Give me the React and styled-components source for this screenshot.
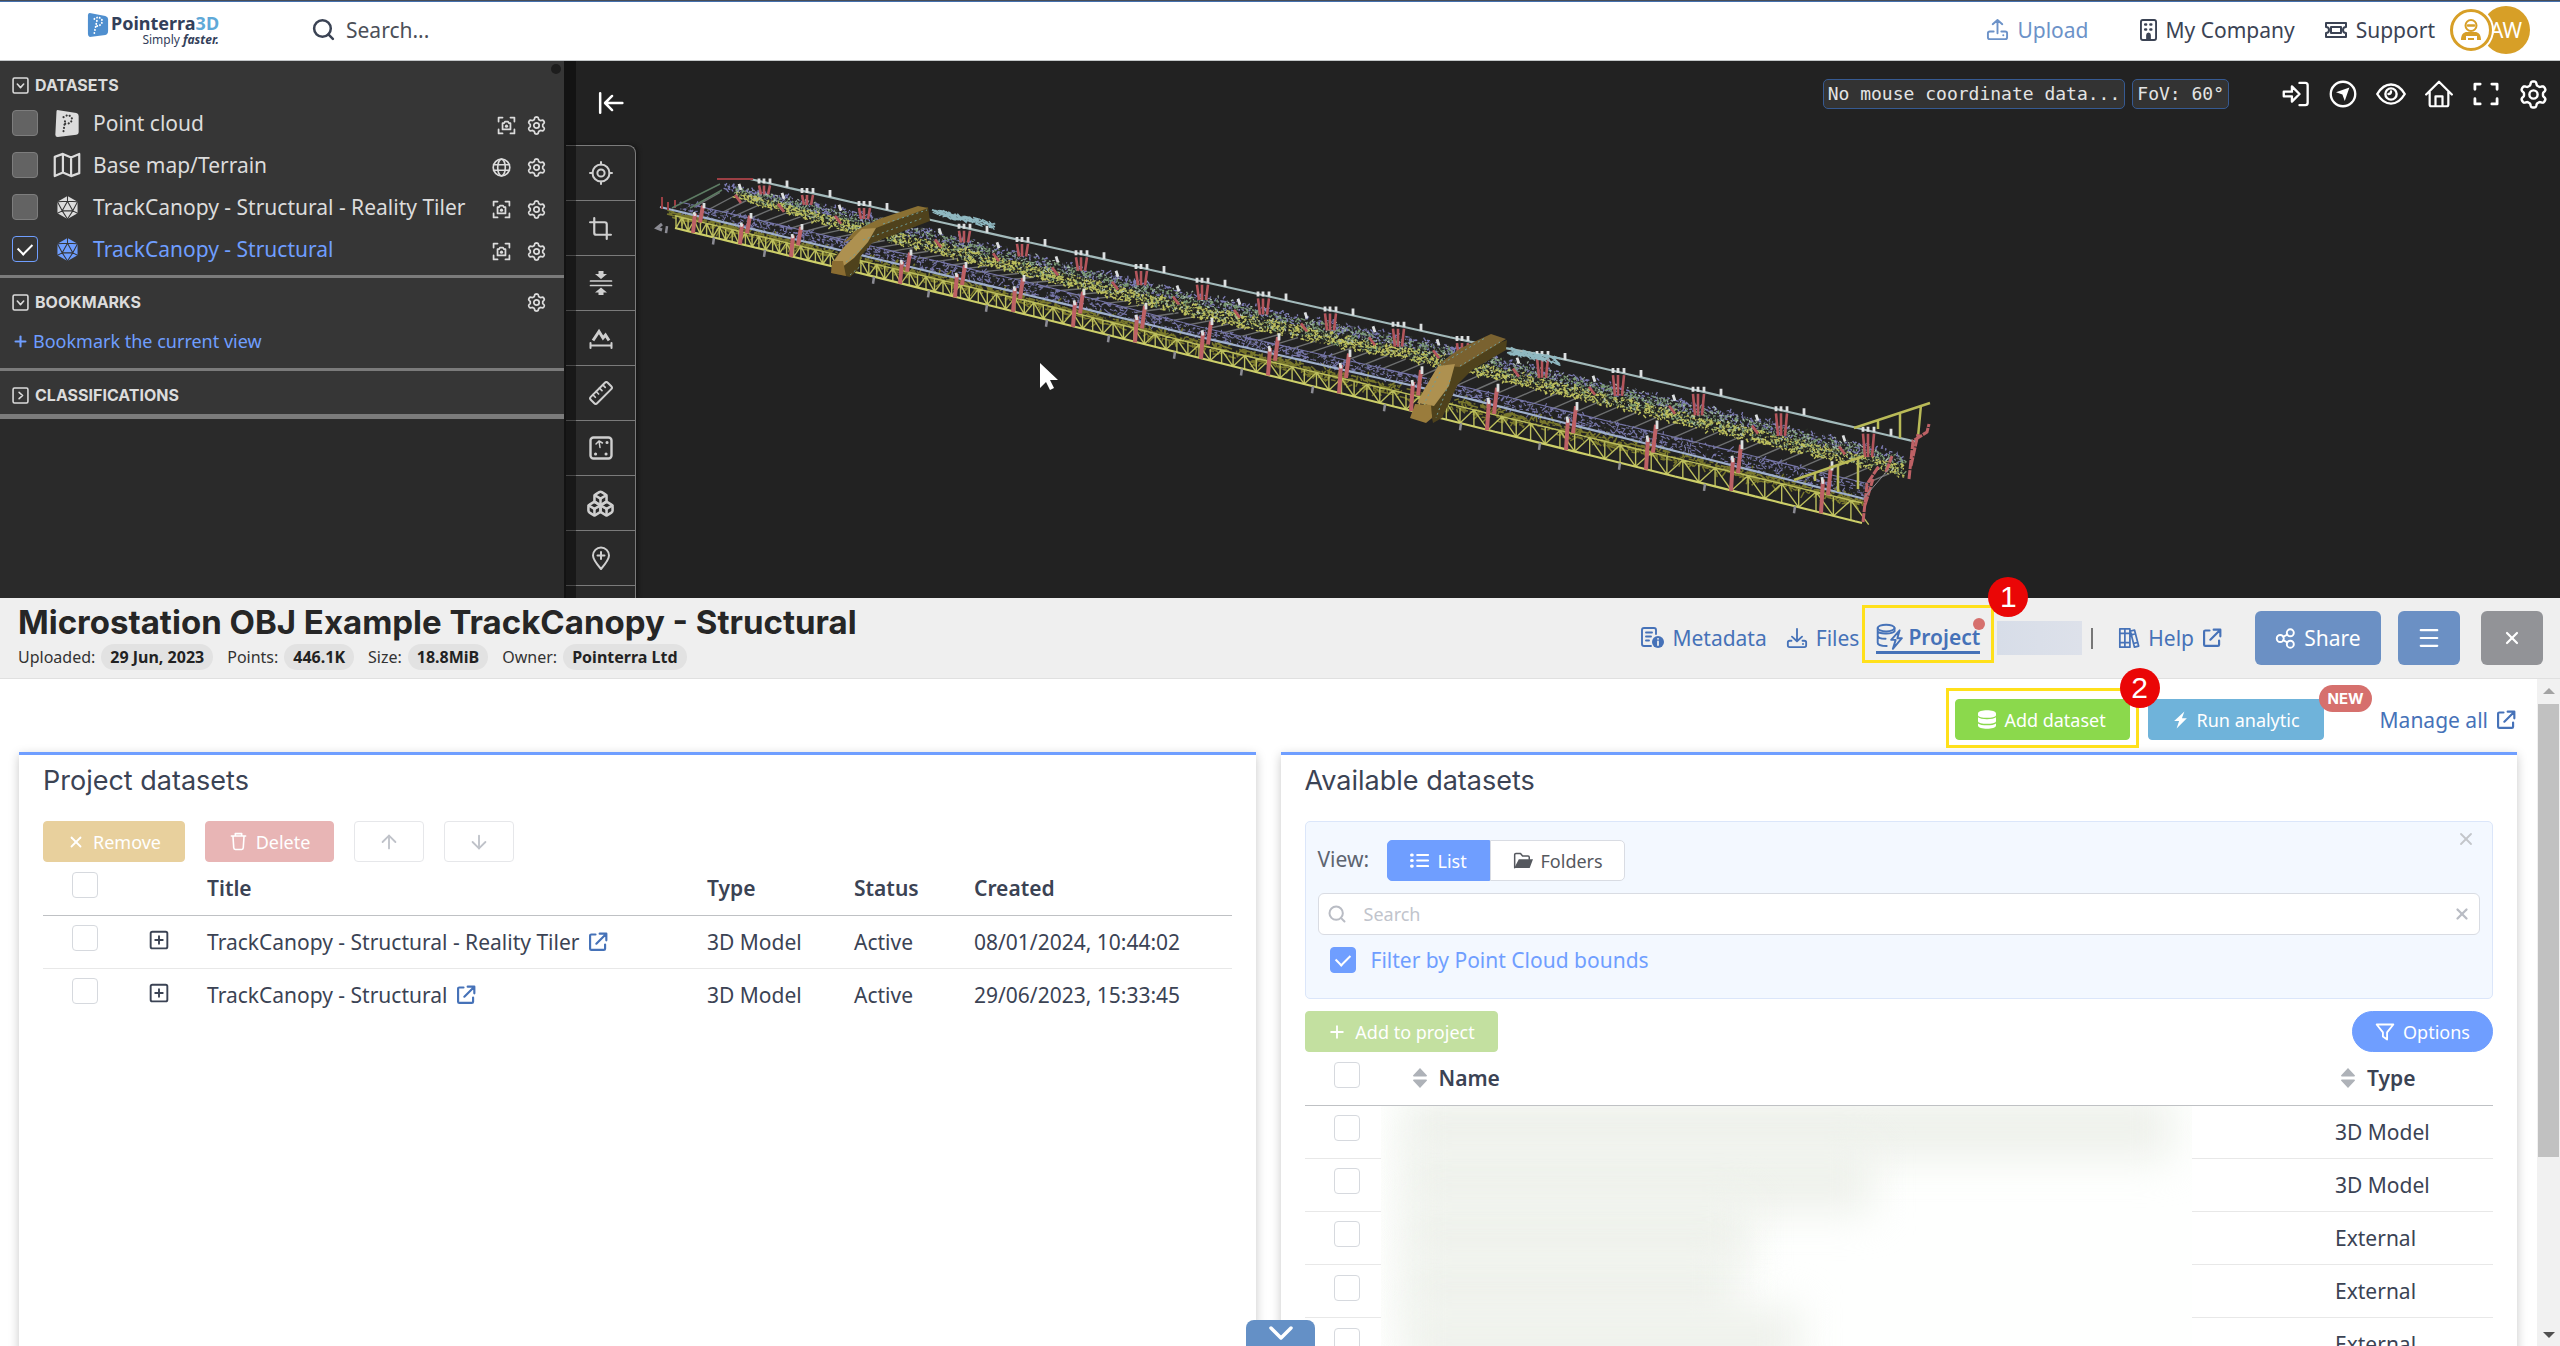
import React from "react";
import styled, { createGlobalStyle, css } from "styled-components";
import { Boxes, Crop, Search, ArrowUp, ArrowDown, X, Plus } from "lucide-react";

const body = `"Noto Sans", "Open Sans", sans-serif`;
const display = `Inter, Roboto, sans-serif`;
const c = {
  ink: "#3b4354",
  link: "#4672b8",
  accent: "#6f9eff",
  steel: "#6b90c4",
  line: "#e8e8e8",
  dark: "#222222",
  panel: "#363636",
  rule: "#7b7b7b",
};

const GlobalStyle = createGlobalStyle`
  * { box-sizing: border-box; }
  body { margin: 0; background: #fff; color: ${c.ink}; font-family: ${body}; font-size: 21px; line-height: 28px; overflow: hidden; }
  button, input { font: inherit; color: inherit; margin: 0; padding: 0; }
  button { cursor: pointer; border: 0; background: none; }
  a { color: inherit; text-decoration: none; }
  h1, h2, h3, p, ul { margin: 0; padding: 0; font-weight: inherit; font-size: inherit; list-style: none; }
`;

const Svg = styled.svg.attrs((p) => ({
  viewBox: p.viewBox || "0 0 24 24",
  width: p.$w || p.$s || 24,
  height: p.$s || 24,
  "aria-hidden": true,
}))`
  display: block;
  flex: none;
  fill: none;
  stroke: currentColor;
  stroke-width: ${(p) => p.$sw || 2};
  stroke-linecap: round;
  stroke-linejoin: round;
  .f { fill: currentColor; stroke: none; }
`;

/* ---------- icons ---------- */
const gearOutline = (() => {
  const pts = [];
  for (let i = 0; i < 120; i++) {
    const t = (i / 120) * Math.PI * 2;
    const w = Math.cos(6 * t);
    const r = 9.3 + 1.5 * Math.tanh(2 * w);
    pts.push(`${(12 + r * Math.sin(t)).toFixed(2)} ${(12 - r * Math.cos(t)).toFixed(2)}`);
  }
  return `M${pts.join("L")}Z`;
})();
const Gear = (p) => (
  <Svg {...p}><path d={gearOutline} /><circle cx="12" cy="12" r="3.4" /></Svg>
);
const ExternalIcon = (p) => (
  <Svg $s={20} $sw={2.6} {...p}><path d="M9 3H4a1.500 1.500 0 0 0-1.500 1.500V20A1.500 1.500 0 0 0 4 21.500h15a1.500 1.500 0 0 0 1.500-1.500v-5M14 2h8v8M22 2 10 14" /></Svg>
);
const UploadIcon = () => (
  <Svg $s={23}><path d="M12 16V2M7 6.500 12 2l5 4.500M8 14H4a2 2 0 0 0-2 2v4a2 2 0 0 0 2 2h16a2 2 0 0 0 2-2v-4a2 2 0 0 0-2-2h-4M18 18h.1" /></Svg>
);
const DownloadIcon = () => (
  <Svg $s={22}><path d="M12 2v13M6.500 10.500 12 15.500l5.500-5M6 15H4a2 2 0 0 0-2 2v3a2 2 0 0 0 2 2h16a2 2 0 0 0 2-2v-3a2 2 0 0 0-2-2h-2M18.500 18.500h.1" /></Svg>
);
const BuildingIcon = () => (
  <Svg $s={22} $w={17} viewBox="3 1 18 22" preserveAspectRatio="none">
    <rect x="4" y="2" width="16" height="20" rx="2" />
    <path d="M8.500 6.500h1M14 6.500h1M8.500 11.500h1M14 11.500h1" strokeWidth="2.600" />
    <path className="f" d="M9.500 22v-5a2.500 2.500 0 0 1 5 0v5z" />
  </Svg>
);
const TicketIcon = () => (
  <Svg $s={24} $sw={2}>
    <path d="M2 5h20v4a3 3 0 0 0 0 6v4H2v-4a3 3 0 0 0 0-6z" /><rect x="7" y="9" width="10" height="6" />
  </Svg>
);
const FocusIcon = () => (
  <Svg $s={19} $sw={2.2} strokeLinecap="butt">
    <path d="M2 7V2h5M17 2h5v5M22 17v5h-5M7 22H2v-5" />
    <path d="M7 9h2l1-2h4l1 2h2v8H7z" /><circle className="f" cx="12" cy="12.800" r="2" />
  </Svg>
);
const GlobeIcon = () => (
  <Svg $s={19} $sw={2.1}>
    <circle cx="12" cy="12" r="10.500" /><ellipse cx="12" cy="12" rx="4.800" ry="10.500" /><path d="M2 8.500h20M2 15.500h20" />
  </Svg>
);
const CloudMark = () => (
  <Svg $s={28} strokeWidth="0">
    <path className="f" d="M3 2Q3 .5 5 1l15 2.500q2 .5 2 2.500v14q0 2-2 2L4 24q-2 0-2-2z" />
    <path d="M9 19 10.500 9M9 7q4-3 7 0 1 4-3 5.500-2 .5-3 0" stroke="#363636" strokeWidth="1.800" strokeDasharray="0.1 2.700" />
  </Svg>
);
const MapIcon = () => (
  <Svg $s={28} $sw={1.9}><path d="M1.500 5 8.500 2.500l7 3 7-3V19l-7 2.500-7-3-7 3zM8.500 2.500v16M15.500 5.500v16" /></Svg>
);
const PolyIcon = () => (
  <Svg $s={23} strokeWidth="0">
    <path className="f" d="M12 0 22.500 6v12L12 24 1.500 18V6z" />
    <path d="M12 0v5.500M12 5.500 6.500 15.500h11zM12 5.500 1.500 6M12 5.500l10.500.5M6.500 15.500 1.500 6M17.500 15.500l5-9.500M6.500 15.500l-5 2.500M17.500 15.500l5 2.500M6.500 15.500 12 24l5.500-8.500" stroke="#363636" strokeWidth="1.100" />
  </Svg>
);
const CollapseIcon = () => (
  <Svg $s={26} $sw={2.3}><path d="M2 3v18M22.500 12H7M13 5.500 6.500 12l6.500 6.500" /></Svg>
);
const MetadataIcon = () => (
  <Svg $s={24} $sw={1.9}>
    <path d="M11 20H4a2 2 0 0 1-2-2V4a2 2 0 0 1 2-2h10a2 2 0 0 1 2 2v4M6 6.500h6M6 10.500h5M6 14.500h3" />
    <circle className="f" cx="18" cy="16" r="6" /><path d="M18 15.500v3.500M18 12.800h.1" stroke="#efefef" strokeWidth="1.800" />
  </Svg>
);
const ProjectIcon = () => (
  <Svg $s={27} $sw={1.7}>
    <ellipse cx="9" cy="4.500" rx="7.500" ry="3" />
    <path d="M1.500 4.500v13c0 1.700 3.500 3 8 3M1.500 11c0 1.700 3 2.900 7 3M16.500 4.500V7M1.500 7.500c1 1.800 12 3 15 0" />
    <path d="m21 6.500-7.500 8.500h4L15 23l8-9.500h-4z" />
  </Svg>
);
const HelpIcon = () => (
  <Svg $s={22} $sw={1.9}>
    <path d="M2 2h5.500v20H2zM7.500 2H13v20H7.500zM13.500 4.500l4.500-1.200 4.500 17.500-4.500 1.200zM2 7h11M2 17h11M14.500 8.500l4.500-1.200M17 18l4.500-1.200" />
  </Svg>
);
const ShareIcon = () => (
  <Svg $s={21} $sw={2.2}>
    <circle cx="6" cy="12" r="4" /><circle cx="17.500" cy="5.500" r="4" /><circle cx="17.500" cy="18.500" r="4" /><path d="m9.500 10 4.500-2.500M9.500 14l4.500 2.500" />
  </Svg>
);
const DatabaseIcon = () => (
  <Svg $s={19} $w={18} viewBox="2 1 20 22" preserveAspectRatio="none">
    <path className="f" d="M2 5c0-5 20-5 20 0v2c0 4-20 4-20 0zM2 9.500c3 3 17 3 20 0V14c0 4-20 4-20 0zM2 16.500c3 3 17 3 20 0V19c0 5-20 5-20 0z" />
  </Svg>
);
const BoltIcon = () => (
  <Svg $s={20} $w={17}><path className="f" d="M17.500 0 3 13.500h7L6.500 24 21 9.500h-7z" /></Svg>
);
const TrashIcon = () => (
  <Svg $s={19} $sw={2}><path d="M3 5h18M8 5V2h8v3M5 5l1 15a2 2 0 0 0 2 2h8a2 2 0 0 0 2-2l1-15" /></Svg>
);
const ListIcon = () => (
  <Svg $s={19} $sw={2.4}><path d="M9 5h14M9 12h14M9 19h14" /><path d="M2 5h.8M2 12h.8M2 19h.8" strokeWidth="4" /></Svg>
);
const FolderIcon = () => (
  <Svg $s={20} $sw={1.8}>
    <path d="M2 20V4.500A1.500 1.500 0 0 1 3.500 3H9l2.500 3H18a1.500 1.500 0 0 1 1.500 1.500V10" /><path className="f" d="M7 10h17l-4 10.500H1.500z" />
  </Svg>
);
const FilterIcon = () => (
  <Svg $s={20} $sw={2.2}><path d="M2 3h20l-7.500 9.500V21l-5-3.500v-5z" /></Svg>
);
const SortIcon = () => (
  <Svg $s={20} $w={14} viewBox="0 0 14 20" color="#aeb2b8"><path className="f" d="M7 0 14 7.500q0 1-1 1H1q-1 0-1-1zM7 20l7-7.500q0-1-1-1H1q-1 0-1 1z" /></Svg>
);
const ToggleIcon = ({ open }) => (
  <Svg $s={17} $sw={2.2}><rect x="1.500" y="1.500" width="21" height="21" rx="2" /><path d={open ? "m7.500 10 4.500 5 4.500-5" : "m10 7.500 5 4.500-5 4.500"} /></Svg>
);
const PlusBoxIcon = () => (
  <Svg $s={20} $sw={2.3}><rect x="2" y="2" width="20" height="20" rx="2" /><path d="M12 7.500v9M7.500 12h9" /></Svg>
);
const Chevron = () => (
  <Svg $s={14} $w={26} viewBox="0 0 26 14" $sw={3.5}><path d="m3 2 10 10L23 2" /></Svg>
);

const toolIcons = [
  ["Target", <Svg $sw={2}><circle cx="12" cy="12" r="8.500" /><circle cx="12" cy="12" r="3.600" /><path d="M12 1v2.500M12 20.500V23M1 12h2.500M20.500 12H23" /></Svg>],
  ["Crop", <Crop size={25} strokeWidth={2.1} />],
  ["Slice", <Svg $sw={1.7}><path d="M1.500 10h21M1.500 14.500h21" /><path className="f" d="M9.500 0h5v3H18l-6 5-6-5h3.500zM9.500 24.500h5v-3H18l-6-5-6 5h3.500z" /></Svg>],
  ["Profile", <Svg $sw={2}><path d="M1.500 17v5M22.500 17v5M2 19.500h20" /><path d="m4 14.500 6-9 4 6.500 2.500-3 3.500 5.500" strokeWidth="3" strokeLinecap="butt" strokeLinejoin="miter" /></Svg>],
  ["Measure", <Svg $sw={2}><g transform="rotate(-45 12 12)"><rect x="0" y="7.500" width="24" height="9" rx="2" /><path d="M5 7.500v3.500M9.600 7.500v3.500M14.400 7.500v3.500M19 7.500v3.500" strokeWidth="1.700" /></g></Svg>],
  ["Register", <Svg $sw={2.4}><rect x="1.500" y="1.500" width="21" height="21" rx="3" /><path d="M11 11.500 10 5M7 8l3-3 3.500 2" strokeWidth="1.500" /><path d="M18 6.500h.1M6.500 18h.1M17 18h.1" strokeWidth="3" /></Svg>],
  ["Objects", <Boxes size={29} strokeWidth={2.1} />],
  ["Place marker", <Svg $sw={2}><path d="M12 23C6 16 4 13 4 9.500a8 8 0 0 1 16 0C20 13 18 16 12 23zM12 6v7M8.500 9.500h7" /></Svg>],
];

const hudIcons = [
  ["Enter", <Svg $s={28} $sw={2}><path d="M15 2.500h5a2 2 0 0 1 2 2v15a2 2 0 0 1-2 2h-5M1.500 10h7V5.500L15 12l-6.500 6.500V14h-7z" /></Svg>],
  ["Navigate", <Svg $s={28} $sw={2}><circle cx="12" cy="12" r="10.500" /><path className="f" d="M17.500 6.500 13.500 18l-2-5.500-5.500-2z" /></Svg>],
  ["Visibility", <Svg $s={30} $sw={1.9}><path d="M1 12C7 1.800 17 1.800 23 12 17 22.200 7 22.200 1 12z" /><circle cx="12" cy="12" r="4.500" /><path d="M10 12a2 2 0 0 0 2-2" /></Svg>],
  ["Home", <Svg $s={28} $sw={1.9}><path d="m1 12.500 11-11 11 11M4 10v11a1.500 1.500 0 0 0 1.500 1.500h13A1.500 1.500 0 0 0 20 21V10M9 22v-8h6v8" /></Svg>],
  ["Full screen", <Svg $s={28} $sw={2.4}><path d="M2.500 8V3.500H7M17 3.500h4.500V8M21.500 16v4.500H17M7 20.500H2.500V16" /></Svg>],
  ["Settings", <Gear $s={29} $sw={2} />],
];

/* ---------- header ---------- */
const Page = styled.div`
  height: 100vh;
  display: flex;
  flex-direction: column;
  overflow: hidden;
`;
const Header = styled.header`
  flex: 0 0 61px;
  display: flex;
  align-items: center;
  padding: 0 30px 2px 87px;
  border-top: 1px solid #474d57;
  border-bottom: 1px solid #c4c7c9;
  box-shadow: inset 0 1px #4470ad;
`;
const Logo = styled.a`
  display: flex;
  align-items: flex-start;
  gap: 2px;
  width: 136px;
  margin-right: 88px;
`;
const LogoWords = styled.span`
  display: flex;
  flex-direction: column;
  align-items: flex-end;
  font: 700 18px/20px ${body};
  color: #33405a;
  em { font-style: normal; color: #5fa9d8; }
  small { font: 400 12px/13px ${body}; }
  small b { font-style: italic; }
`;
const HeaderSearch = styled.label`
  display: flex;
  align-items: center;
  gap: 10px;
  flex: 1;
  input { border: 0; outline: 0; background: none; width: 400px; height: 40px; }
  input::placeholder { color: #4b4f58; opacity: 1; }
`;
const HeaderLink = styled.a`
  display: flex;
  align-items: center;
  gap: 8px;
  margin-left: ${(p) => p.$gap}px;
  color: ${(p) => (p.$soft ? "#6c92c8" : c.ink)};
`;
const Avatars = styled.div`
  display: flex;
  align-items: center;
  margin-left: 15px;
`;
const AgentAvatar = styled.span`
  display: grid;
  place-items: center;
  width: 42px;
  height: 42px;
  border: 3px solid #d79f27;
  border-radius: 50%;
  background: #fff;
  box-shadow: 0 0 0 2px #fff;
  color: #d79f27;
  z-index: 1;
`;
const UserAvatar = styled.span`
  display: grid;
  place-items: center;
  width: 48px;
  height: 48px;
  margin-left: -10px;
  border-radius: 50%;
  background: #d79f27;
  color: #fff;
`;

/* ---------- viewer ---------- */
const Viewer = styled.section`
  position: relative;
  flex: 0 0 537px;
  display: flex;
  background: ${c.dark};
  overflow: hidden;
`;
const SidePanel = styled.aside`
  position: relative;
  flex: 0 0 564px;
  background: #2a2a2a;
  color: #dcdcdc;
  z-index: 2;
  box-shadow: 12px 0 rgba(0, 0, 0, 0.42);
`;
const PanelNub = styled.span`
  position: absolute;
  top: 3px;
  right: 3px;
  width: 10px;
  height: 10px;
  border-radius: 50%;
  background: #1d1d1d;
`;
const PanelSection = styled.section`
  padding: ${(p) => p.$pad};
  background: ${c.panel};
  border-bottom: ${(p) => p.$rule || 3}px solid ${c.rule};
`;
const PanelHeading = styled.h2`
  display: flex;
  align-items: center;
  justify-content: space-between;
  height: 24px;
  font: 700 16px/24px ${display};
  > button:first-child { display: flex; align-items: center; gap: 6px; }
`;
const LayerList = styled.ul`
  && { margin-top: 5px; }
`;
const LayerRow = styled.li`
  display: flex;
  align-items: center;
  height: 42px;
  color: ${(p) => (p.$on ? c.accent : "#dcdcdc")};
  label { display: flex; align-items: center; flex: 1; }
`;
const LayerIcon = styled.span`
  display: grid;
  place-items: center;
  width: 28px;
  margin: 0 12px 0 15px;
`;
const RowTools = styled.span`
  display: flex;
  gap: ${(p) => p.$gap || 16}px;
  padding-top: 4px;
  color: #dcdcdc;
`;
const BookmarkButton = styled.button`
  display: flex;
  align-items: center;
  gap: 4px;
  margin-top: 14px;
  font-size: 18px;
  line-height: 26px;
  color: ${c.accent};
`;
const ToolColumn = styled.div`
  flex: 0 0 74px;
  padding-left: 2px;
  z-index: 1;
  display: flex;
  flex-direction: column;
`;
const CollapseButton = styled.button`
  display: grid;
  place-items: center;
  flex: 0 0 84px;
  padding-left: 18px;
  color: #fff;
`;
const ToolBar = styled.div`
  width: 70px;
  flex: 1;
  border: 1px solid ${c.rule};
  border-width: 1px 1px 0 0;
  border-radius: 0 8px 0 0;
  background: #2a2a2a;
  box-shadow: 2px 0 4px #141414;
`;
const Tool = styled.button`
  display: grid;
  place-items: center;
  width: 100%;
  height: 55px;
  border-bottom: 1px solid ${c.rule};
  color: #cfcfcf;
`;
const Hud = styled.div`
  flex: 1;
  display: flex;
  justify-content: flex-end;
  align-items: flex-start;
  gap: 7px;
  padding: 18px 12px 0 0;
  z-index: 1;
`;
const HudPill = styled.span`
  padding: 0 4px;
  border: 1px solid #365a92;
  border-radius: 5px;
  background: #333;
  color: #e4e4e4;
  font: 18px/28px "DejaVu Sans Mono", monospace;
`;
const HudIcons = styled.div`
  display: flex;
  align-items: center;
  gap: 19px;
  height: 30px;
  margin-left: 46px;
  color: #fff;
  button { display: block; }
`;
const Scene = styled.svg`
  position: absolute;
  inset: 0;
  width: 100%;
  height: 100%;
`;

/* ---------- scene drawing ---------- */
const at = (pts, x) => {
  let i = 0;
  while (i < pts.length - 2 && x > pts[i + 1][0]) i++;
  const [a, b] = [pts[i], pts[i + 1]];
  return a[1] + ((x - a[0]) * (b[1] - a[1])) / (b[0] - a[0]);
};
const curves = {
  rail: [[750, 179], [1200, 281], [1467, 341], [1559, 358], [1917, 442]],
  backTop: [[725, 184], [850, 210], [1200, 294], [1460, 347], [1900, 452]],
  backBot: [[725, 194], [850, 232], [1200, 318], [1460, 370], [1908, 478]],
  front: [[660, 207], [1040, 298], [1200, 337], [1462, 397], [1869, 500]],
  purple: [[680, 202], [1040, 285], [1200, 327], [1491, 393], [1869, 484]],
  yTop: [[672, 215], [1040, 304], [1200, 345], [1408, 394], [1862, 503]],
  yBot: [[675, 228], [827, 265], [1040, 318], [1200, 358], [1408, 410], [1862, 523]],
};
const buildScene = () => {
  let seed = 7;
  const rnd = () => ((seed = (seed * 16807) % 2147483647) / 2147483647);
  const out = {};
  const line = (k, x1, y1, x2, y2) => {
    (out[k] = out[k] || []).push(`M${x1.toFixed(1)} ${y1.toFixed(1)}L${x2.toFixed(1)} ${y2.toFixed(1)}`);
  };
  const speckle = (k, n, x0, x1, top, bot, a, b, len) => {
    for (let i = 0; i < n; i++) {
      const x = x0 + rnd() * (x1 - x0);
      const t = at(curves[top], x);
      const h = at(curves[bot], x) - t;
      const y = t + h * (a + rnd() * (b - a));
      const d = (rnd() - 0.5) * len;
      line(k, x, y, x + d, y + (rnd() < 0.5 ? d * 0.25 : (rnd() - 0.5) * len));
    }
  };
  const follow = (k, name, x0, x1) => {
    for (let x = x0; x < x1; x += 20) {
      const e = Math.min(x + 20, x1);
      line(k, x, at(curves[name], x), e, at(curves[name], e));
    }
  };
  for (let x = 720; x < 1890; x += 13 + (x - 700) / 130) {
    const y = at(curves.backBot, x);
    line("tie", x, y, x - 26, at(curves.purple, x - 26) + 2);
  }
  speckle("purple", 1800, 725, 1905, "backTop", "backBot", 0, 0.5, 7);
  speckle("green", 3000, 735, 1905, "backTop", "backBot", 0.15, 0.95, 6);
  speckle("yellow", 3200, 735, 1905, "backTop", "backBot", 0.5, 1.05, 6);
  speckle("white", 700, 735, 1900, "backTop", "backBot", 0, 0.9, 5);
  speckle("darkGap", 1300, 735, 1900, "backTop", "backBot", 0, 1, 5);
  speckle("frontPurple", 1700, 680, 1868, "purple", "front", 0, 1, 9);
  speckle("darkGap", 500, 680, 1868, "purple", "front", 0, 1, 5);
  speckle("olive", 1800, 672, 1862, "front", "yTop", 0.3, 1.6, 14);
  follow("frontPurple", "purple", 680, 1868);
  follow("rail", "front", 660, 1868);
  follow("railThin", "rail", 750, 1917);
  follow("yellow", "yTop", 675, 1862);
  follow("yellowBold", "yBot", 675, 1862);
  let flip = 0;
  for (let x = 676; x < 1855; ) {
    const w = 6 + (x - 676) / 100;
    const n = x + w;
    line("yellow", x, at(curves.yTop, x), x, at(curves.yBot, x));
    if (flip++ % 2) line("yellow", x, at(curves.yTop, x), n, at(curves.yBot, n));
    else line("yellow", x, at(curves.yBot, x), n, at(curves.yTop, n));
    x = n;
  }
  [765, 808, 865, 965, 1023, 1082, 1142, 1203, 1264, 1331, 1399, 1463, 1543, 1619, 1699, 1782, 1869].forEach((x, i) => {
    const y = at(curves.rail, x);
    const h = 12 + i * 0.9;
    [-6, -1, 5].forEach((o, j) => {
      line("red", x + o, y + 3, x + o - (j - 1) * 2, y + h);
      line("cap", x + o, y - 4, x + o, y + 1);
    });
    line("cap", x + 22, y - 2, x + 22, y + 5);
    const m = at(curves.backTop, x - 26);
    line("red", x - 30, m + 8, x - 24, m + 16);
    line("cap", x - 26, m - 3, x - 24, m + 3);
  });
  [695, 742, 793, 902, 957, 1015, 1075, 1137, 1203, 1270, 1341, 1413, 1489, 1568, 1648, 1733, 1823].forEach((x, i) => {
    const b = at(curves.yBot, x);
    const h = 26 + i * 1.2;
    line("redBold", x, b - h * 0.75, x - 2, b);
    line("redBold", x + 8, b - h * 1.05, x + 5, b - h * 0.4);
    line("cap", x - 1, b - h * 0.8, x, b - h * 0.65);
    line("cap", x + 9, b - h * 1.15, x + 9, b - h * 0.95);
    line("grey", x - 28, at(curves.yBot, x - 28), x - 29, at(curves.yBot, x - 28) + 7);
  });
  for (let i = 0; i < 90; i++) {
    const a = rnd();
    line("cyan", 930 + a * 60, 207 + a * 14 + rnd() * 7, 936 + a * 60, 209 + a * 14 + rnd() * 7);
    line("cyan", 1505 + a * 50, 346 + a * 10 + rnd() * 8, 1511 + a * 50, 348 + a * 10 + rnd() * 8);
  }
  return Object.fromEntries(Object.entries(out).map(([k, v]) => [k, v.join("")]));
};
const strokes = [
  ["tie", "#6d6f70", 1.4],
  ["purple", "#7c7cb4", 1.3],
  ["green", "#7c9c74", 1.3],
  ["frontPurple", "#7676a8", 1.1],
  ["olive", "#77762c", 1.5],
  ["yellow", "#bcbe5c", 1.4],
  ["white", "#a9bcae", 1.2],
  ["darkGap", "#2a2e28", 1.4],
  ["yellowBold", "#cdcf69", 2.2],
  ["rail", "#9fb0cc", 2.2],
  ["railThin", "#a3babb", 2.2],
  ["grey", "#8b8b93", 2.5],
  ["red", "#b4565c", 2.6],
  ["redBold", "#bd6165", 4],
  ["cap", "#dcdfe0", 2.8],
  ["cyan", "#8fb8c1", 1.2],
];
const scenePaths = buildScene();
const TrackModel = () => (
  <Scene viewBox="0 61 2560 537" preserveAspectRatio="xMinYMin meet" fill="none" role="img" aria-label="Track canopy model">
    {strokes.map(([k, color, w]) => <path key={k} d={scenePaths[k]} stroke={color} strokeWidth={w} />)}
    <path d="M717 179h36M662 197v12M668 202v8M675 200v8" stroke="#9c3f44" strokeWidth="2" />
    <path d="M672 208 720 184M690 208l32-18" stroke="#5d7c63" strokeWidth="1.500" />
    <path d="m662 224-5 4 5 2" stroke="#8b8b93" strokeWidth="3" />
    <path fill="#4f421c" d="m928 207 2 14-58 22-12 14-1 12-9 8-18-4 4-18 40-32z" />
    <path fill="#8a7033" d="m918 206 10 2-52 20-16 7-17 8 12-12 24-12z" />
    <path fill="#ae9150" d="m862 229 14-1-8 14-14 16-13 10-8-6 10-14z" />
    <path fill="#8a6c31" d="M832 261h11l3 15-15-3z" />
    <path d="m883 224 44-14M863 240l60-22M846 262l16-14M850 275l12-10" stroke="#6f9d9a" strokeDasharray="2 3" />
    <path fill="#4f421c" d="m1507 340-1 10-34 20-14 14-16 34-9 5-4-20 30-45z" />
    <path fill="#7a6230" d="m1491 334 15 5-46 28-23-2 24-17z" />
    <path fill="#ae9150" d="m1438 366 17-2-6 22-15 20-17-3 8-15z" />
    <path fill="#9a7c3c" d="m1415 404 16 1 1 13-6 5-16-5z" />
    <path d="m1440 372-16 32M1450 380l-14 38M1460 366l40-24M1435 368l50-30" stroke="#6f9d9a" strokeDasharray="2 3" />
    <path d="m1854 428 76-25M1900 414v24M1921 405l-3 32M1878 421v8M1794 480l70-24M1838 466v26M1858 459v30M1815 473v8" stroke="#b9ba57" strokeWidth="2.500" />
    <path d="m1909 479 4-38 14-9 2-8M1911 466l7-32M1863 522l4-38 12-18M1865 505l8-26M1886 472l6-16" stroke="#bd6165" strokeWidth="3" strokeDasharray="9 1" />
    <path d="m1862 500 26-30" stroke="#8b8b93" />
    <path d="M1040 363v25l6-6 4 8 4-2-4-8h8z" fill="#fff" />
  </Scene>
);

/* ---------- info bar ---------- */
const InfoBar = styled.section`
  flex: 0 0 81px;
  display: flex;
  justify-content: space-between;
  align-items: center;
  padding: 0 17px 0 18px;
  background: #efefef;
  border-bottom: 1px solid #e0e0e0;
  z-index: 3;
`;
const TitleBlock = styled.div`
  padding-bottom: 4px;
`;
const Title = styled.h1`
  font: 700 33px/40px ${display};
  color: #262626;
`;
const MetaList = styled.dl`
  display: flex;
  align-items: center;
  gap: 14px;
  margin: 2px 0 0;
  font-size: 16px;
  line-height: 26px;
  color: #333;
  div { display: flex; gap: 6px; }
  dd { margin: 0; padding: 0 9px; border-radius: 13px; background: #e2e2e2; font-weight: 700; color: #222; }
`;
const BarActions = styled.nav`
  display: flex;
  align-items: center;
  height: 54px;
  color: ${c.link};
`;
const TabLink = styled.a`
  position: relative;
  display: flex;
  align-items: center;
  gap: 8px;
  margin-right: ${(p) => p.$after || 0}px;
  ${(p) => p.$active && css`
    gap: 5px;
    font-weight: 600;
    border-bottom: 3px solid ${c.link};
  `}
`;
const Highlight = styled.span`
  position: absolute;
  inset: ${(p) => p.$inset};
  border: 3px solid #ffe01b;
  pointer-events: none;
`;
const StepBadge = styled.span`
  position: absolute;
  top: ${(p) => p.$top}px;
  right: ${(p) => p.$right}px;
  width: 40px;
  height: 40px;
  border-radius: 50%;
  background: #ea0606;
  color: #fff;
  font: 400 30px/40px "Liberation Sans", sans-serif;
  text-align: center;
`;
const Dot = styled.span`
  position: absolute;
  top: -5px;
  right: -5px;
  width: 12px;
  height: 12px;
  border-radius: 50%;
  background: #d6706d;
`;
const HiddenTab = styled.span`
  width: 85px;
  height: 34px;
  background: linear-gradient(90deg, #d7dde8, #dde1ea);
`;
const Divider = styled.span`
  width: 2px;
  height: 21px;
  margin: 0 25px 0 9px;
  background: #777;
`;
const BarButton = styled.button`
  display: flex;
  align-items: center;
  justify-content: center;
  gap: 8px;
  width: ${(p) => p.$w}px;
  height: 54px;
  margin-left: ${(p) => p.$gap}px;
  border-radius: 6px;
  background: ${(p) => p.$bg};
  color: #fff;
`;

/* ---------- content ---------- */
const Content = styled.main`
  position: relative;
  flex: 1;
  min-height: 0;
  display: flex;
  background: #fff;
  z-index: 4;
`;
const ScrollArea = styled.div`
  flex: 1;
  min-width: 0;
  display: flex;
  flex-direction: column;
`;
const ActionRow = styled.div`
  flex: 0 0 73px;
  display: flex;
  justify-content: flex-end;
  align-items: flex-start;
  gap: 18px;
  padding: 20px 21px 0;
  position: relative;
  z-index: 1;
`;
const Anchor = styled.div`
  position: relative;
  display: flex;
  z-index: ${(p) => p.$z || 0};
`;
const Button = styled.button`
  display: flex;
  align-items: center;
  justify-content: center;
  gap: 8px;
  width: ${(p) => p.$w}px;
  height: 41px;
  border: 1px solid ${(p) => p.$line || p.$bg || "transparent"};
  border-radius: ${(p) => (p.$pill ? 21 : 4)}px;
  background: ${(p) => p.$bg || "#fff"};
  color: ${(p) => p.$fg || "#fff"};
  font-size: 18px;
`;
const NewTag = styled.span`
  position: absolute;
  top: -14px;
  right: -48px;
  padding: 0 8px;
  border-radius: 14px;
  background: #d6706d;
  color: #fff;
  font: 700 15px/27px ${display};
`;
const ManageLink = styled.a`
  display: flex;
  align-items: center;
  gap: 8px;
  height: 41px;
  margin-left: 38px;
  color: ${c.link};
`;
const Cards = styled.div`
  flex: 1;
  min-height: 0;
  display: grid;
  grid-template-columns: 1fr 1fr;
  gap: 25px;
  padding: 0 20px 0 19px;
`;
const Card = styled.section`
  padding: 11px 24px;
  border-top: 3px solid ${c.accent};
  background: #fff;
  box-shadow: 0 3px 10px rgba(0, 0, 0, 0.22);
`;
const CardTitle = styled.h2`
  margin-bottom: 25px;
  font: 400 27px/30px ${display};
  color: ${c.ink};
`;
const ButtonRow = styled.div`
  display: flex;
  gap: 20px;
  justify-content: ${(p) => (p.$spread ? "space-between" : "flex-start")};
`;
const Table = styled.table`
  width: 100%;
  table-layout: fixed;
  border-collapse: collapse;
  th, td { height: 53px; padding: 0; text-align: left; border-bottom: 1px solid ${c.line}; }
  th { font-weight: 600; border-color: #bfc1c4; }
  tbody tr:last-child td { border-bottom-color: ${(p) => (p.$openEnd ? "transparent" : c.line)}; }
`;
const CheckCell = styled.td`
  && { padding: 0 0 7px 29px; }
`;
const Check = styled.input.attrs({ type: "checkbox" })`
  appearance: none;
  display: grid;
  place-items: center;
  flex: none;
  width: 26px;
  height: 26px;
  border: 1px solid #d6d9de;
  border-radius: 4px;
  background: #fff;
  &::before {
    content: "";
    width: 12px;
    height: 7px;
    margin-top: -4px;
    border: solid #fff;
    border-width: 0 0 2px 2px;
    transform: rotate(-45deg);
    visibility: hidden;
  }
  &:checked { background: ${c.accent}; border-color: ${c.accent}; }
  &:checked::before { visibility: visible; }
  ${(p) => p.$dark && css`
    background: #636363;
    border-color: #7d7d7d;
    &:checked { background: transparent; }
  `}
`;
const TitleLink = styled.a`
  display: inline-flex;
  align-items: center;
  gap: 9px;
  svg { color: ${c.link}; }
`;
const SortHead = styled.button`
  display: flex;
  align-items: center;
  gap: 12px;
  padding-left: ${(p) => p.$pad}px;
  font-weight: 600;
`;
const TypeCell = styled.td`
  && { padding-left: 13px; }
`;
const FilterBox = styled.div`
  position: relative;
  display: flex;
  flex-direction: column;
  gap: 12px;
  height: 178px;
  margin-bottom: 12px;
  padding: 18px 12px;
  border: 1px solid #dbe6fa;
  border-radius: 5px;
  background: #f3f8ff;
`;
const ViewRow = styled.div`
  display: flex;
  align-items: center;
  color: #5d6470;
  > span { padding-bottom: 4px; }
`;
const Segments = styled.div`
  display: flex;
  margin-left: 18px;
  button:first-child { border-radius: 5px 0 0 5px; }
  button:last-child { border-radius: 0 5px 5px 0; }
`;
const CloseButton = styled.button`
  position: absolute;
  top: 7px;
  right: 16px;
  color: #c3c6ca;
  svg { display: block; }
`;
const SearchField = styled.label`
  display: flex;
  align-items: center;
  height: 42px;
  padding: 0 8px;
  border: 1px solid #d9dce3;
  border-radius: 6px;
  background: #fff;
  color: #b9bcc4;
  font-size: 18px;
  input { flex: 1; border: 0; outline: 0; margin-left: 17px; background: none; }
  input::placeholder { color: #c1c4cc; opacity: 1; }
  button { display: flex; }
`;
const BoundsLabel = styled.label`
  display: flex;
  align-items: center;
  gap: 15px;
  padding-left: 12px;
  height: 26px;
  color: ${c.accent};
`;
const RedactedCell = styled.td`
  && { border-color: transparent; vertical-align: top; }
`;
const Redacted = styled.div`
  height: 265px;
  overflow: hidden;
  background: #fefffe;
`;
const RedactedBar = styled.div`
  width: ${(p) => p.$w}%;
  height: 53px;
  margin-left: 22px;
  background: #eef1eb;
  box-shadow: 0 -10px #eef1eb;
  filter: blur(20px);
`;
const ScrollTrack = styled.div`
  flex: 0 0 23px;
  display: flex;
  flex-direction: column;
  align-items: center;
  background: #f1f1f1;
`;
const ScrollThumb = styled.div`
  width: 21px;
  flex: 0 0 453px;
  background: #c1c1c1;
`;
const ScrollArrow = styled.span`
  margin: ${(p) => (p.$up ? "9px 0 10px" : "auto 0 8px")};
  border: 6px solid transparent;
  border-width: ${(p) => (p.$up ? "0 6px 6px" : "6px 6px 0")};
  border-${(p) => (p.$up ? "bottom" : "top")}-color: ${(p) => (p.$up ? "#a3a3a3" : "#505050")};
`;
const DrawerTab = styled.button`
  position: absolute;
  bottom: 0;
  left: 50%;
  margin-left: -34px;
  display: grid;
  place-items: center;
  width: 69px;
  height: 26px;
  border-radius: 8px 8px 0 0;
  background: #6490c6;
  color: #fff;
  z-index: 2;
`;

const layers = [
  { name: "Point cloud", icon: <CloudMark />, tool: <FocusIcon />, gap: 11 },
  { name: "Base map/Terrain", icon: <MapIcon />, tool: <GlobeIcon /> },
  { name: "TrackCanopy - Structural - Reality Tiler", icon: <PolyIcon />, tool: <FocusIcon /> },
  { name: "TrackCanopy - Structural", icon: <PolyIcon />, tool: <FocusIcon />, on: true },
];
const meta = [["Uploaded:", "29 Jun, 2023"], ["Points:", "446.1K"], ["Size:", "18.8MiB"], ["Owner:", "Pointerra Ltd"]];
const projectRows = [
  ["TrackCanopy - Structural - Reality Tiler", "3D Model", "Active", "08/01/2024, 10:44:02"],
  ["TrackCanopy - Structural", "3D Model", "Active", "29/06/2023, 15:33:45"],
];
const availableTypes = ["3D Model", "3D Model", "External", "External", "External"];
const redactedWidths = [95, 58, 43, 41, 49];

export default function App() {
  return (
    <Page>
      <GlobalStyle />
      <Header>
        <Logo href="#">
          <Svg $s={24} $w={22} strokeWidth="0" preserveAspectRatio="none">
            <path d="M3 0 20 3q3 1 3 3v12q0 3-3 4L3 24q-2-1-2-3V3q0-3 2-3z" style={{ fill: "#4f8fcf" }} stroke="none" />
            <path d="M8 20 11 7M8 6q4-3 8 0 2 6-5 7" stroke="#fff" strokeWidth="2" strokeDasharray="0.1 3" />
          </Svg>
          <LogoWords>
            <span>Pointerra<em>3D</em></span>
            <small>Simply <b>faster.</b></small>
          </LogoWords>
        </Logo>
        <HeaderSearch>
          <Search size={25} strokeWidth={2.4} />
          <input aria-label="Search" placeholder="Search..." />
        </HeaderSearch>
        <HeaderLink href="#" $soft><UploadIcon />Upload</HeaderLink>
        <HeaderLink href="#" $gap={52}><BuildingIcon />My Company</HeaderLink>
        <HeaderLink href="#" $gap={29}><TicketIcon />Support</HeaderLink>
        <Avatars>
          <AgentAvatar>
            <Svg $s={24} $sw={2}>
              <circle cx="12" cy="7.500" r="5.500" /><path d="M9 7.500h6" strokeWidth="2.600" />
              <path className="f" d="M2 22c0-6 3-8 6-8h8c3 0 6 2 6 8h-4v-4H7v4z" /><path className="f" d="M9 20h6v2H9z" />
            </Svg>
          </AgentAvatar>
          <UserAvatar>AW</UserAvatar>
        </Avatars>
      </Header>

      <Viewer>
        <TrackModel />
        <SidePanel>
          <PanelNub />
          <PanelSection $pad="12px 18px 5px 12px">
            <PanelHeading><button><ToggleIcon open />DATASETS</button></PanelHeading>
            <LayerList>
              {layers.map((l) => (
                <LayerRow key={l.name} $on={l.on}>
                  <label><Check $dark defaultChecked={l.on} /><LayerIcon>{l.icon}</LayerIcon>{l.name}</label>
                  <RowTools $gap={l.gap}>
                    <button aria-label={`Zoom to ${l.name}`}>{l.tool}</button>
                    <button aria-label={`${l.name} settings`}><Gear $s={19} $sw={2.2} /></button>
                  </RowTools>
                </LayerRow>
              ))}
            </LayerList>
          </PanelSection>
          <PanelSection $pad="12px 18px 14px 12px">
            <PanelHeading>
              <button><ToggleIcon open />BOOKMARKS</button>
              <button aria-label="Bookmark settings"><Gear $s={19} $sw={2.2} /></button>
            </PanelHeading>
            <BookmarkButton><Plus size={17} strokeWidth={3} />Bookmark the current view</BookmarkButton>
          </PanelSection>
          <PanelSection $pad="12px 18px 7px 12px" $rule={5}>
            <PanelHeading><button><ToggleIcon />CLASSIFICATIONS</button></PanelHeading>
          </PanelSection>
        </SidePanel>
        <ToolColumn>
          <CollapseButton aria-label="Collapse panel"><CollapseIcon /></CollapseButton>
          <ToolBar>
            {toolIcons.map(([name, icon]) => <Tool key={name} aria-label={name}>{icon}</Tool>)}
          </ToolBar>
        </ToolColumn>
        <Hud>
          <HudPill>No mouse coordinate data...</HudPill>
          <HudPill>FoV: 60°</HudPill>
          <HudIcons>
            {hudIcons.map(([name, icon]) => <button key={name} aria-label={name}>{icon}</button>)}
          </HudIcons>
        </Hud>
      </Viewer>

      <InfoBar>
        <TitleBlock>
          <Title>Microstation OBJ Example TrackCanopy - Structural</Title>
          <MetaList>
            {meta.map(([k, v]) => <div key={k}><dt>{k}</dt><dd>{v}</dd></div>)}
          </MetaList>
        </TitleBlock>
        <BarActions>
          <TabLink href="#" $after={19}><MetadataIcon />Metadata</TabLink>
          <TabLink href="#" $after={17}><DownloadIcon />Files</TabLink>
          <TabLink href="#" $after={17} $active>
            <ProjectIcon />Project
            <Dot />
            <Highlight $inset="-18px -14px -12px"><StepBadge $top={-31} $right={-37}>1</StepBadge></Highlight>
          </TabLink>
          <HiddenTab />
          <Divider />
          <TabLink href="#"><HelpIcon />Help<ExternalIcon /></TabLink>
          <BarButton $w={126} $gap={33} $bg={c.steel}><ShareIcon />Share</BarButton>
          <BarButton $w={62} $gap={17} $bg={c.steel} aria-label="Menu">
            <Svg $s={22} $sw={2.4}><path d="M3 3.500h18M3 12h18M3 20.500h18" /></Svg>
          </BarButton>
          <BarButton $w={62} $gap={21} $bg="#929397" aria-label="Close"><X size={20} strokeWidth={2.6} /></BarButton>
        </BarActions>
      </InfoBar>

      <Content>
        <ScrollArea>
          <ActionRow>
            <Anchor $z={1}>
              <Button $w={175} $bg="#8bd94c"><DatabaseIcon />Add dataset</Button>
              <Highlight $inset="-11px -9px -8px"><StepBadge $top={-23} $right={-24}>2</StepBadge></Highlight>
            </Anchor>
            <Anchor>
              <Button $w={176} $bg="#6fb3da"><BoltIcon />Run analytic</Button>
              <NewTag>NEW</NewTag>
            </Anchor>
            <ManageLink href="#">Manage all<ExternalIcon /></ManageLink>
          </ActionRow>
          <Cards>
            <Card>
              <CardTitle>Project datasets</CardTitle>
              <ButtonRow>
                <Button $w={142} $bg="#e8d09d"><X size={18} strokeWidth={2.4} />Remove</Button>
                <Button $w={129} $bg="#e8b5b5"><TrashIcon />Delete</Button>
                <Button $w={70} $line="#e6e7ea" $fg="#bfc2c9" aria-label="Move up"><ArrowUp size={22} /></Button>
                <Button $w={70} $line="#e6e7ea" $fg="#bfc2c9" aria-label="Move down"><ArrowDown size={22} /></Button>
              </ButtonRow>
              <Table $openEnd>
                <colgroup>
                  <col width="106" /><col width="58" /><col width="500" /><col width="147" /><col width="120" /><col />
                </colgroup>
                <thead>
                  <tr>
                    <CheckCell as="th"><Check aria-label="Select all project datasets" /></CheckCell>
                    <th aria-label="Expand" /><th>Title</th><th>Type</th><th>Status</th><th>Created</th>
                  </tr>
                </thead>
                <tbody>
                  {projectRows.map(([title, type, status, created]) => (
                    <tr key={title}>
                      <CheckCell><Check aria-label={`Select ${title}`} /></CheckCell>
                      <td><button aria-label={`Expand ${title}`}><PlusBoxIcon /></button></td>
                      <td><TitleLink href="#">{title}<ExternalIcon /></TitleLink></td>
                      <td>{type}</td><td>{status}</td><td>{created}</td>
                    </tr>
                  ))}
                </tbody>
              </Table>
            </Card>
            <Card>
              <CardTitle>Available datasets</CardTitle>
              <FilterBox>
                <CloseButton aria-label="Close filter"><X size={20} strokeWidth={2.2} /></CloseButton>
                <ViewRow>
                  <span>View:</span>
                  <Segments>
                    <Button $w={103} $bg={c.accent}><ListIcon />List</Button>
                    <Button $w={135} $line="#d9dce3" $fg="#55585e"><FolderIcon />Folders</Button>
                  </Segments>
                </ViewRow>
                <SearchField>
                  <Search size={20} strokeWidth={2.4} />
                  <input aria-label="Search datasets" placeholder="Search" />
                  <button aria-label="Clear search"><X size={18} strokeWidth={3} /></button>
                </SearchField>
                <BoundsLabel><Check defaultChecked />Filter by Point Cloud bounds</BoundsLabel>
              </FilterBox>
              <ButtonRow $spread>
                <Button $w={193} $bg="#c3e0a0"><Plus size={20} strokeWidth={2.2} />Add to project</Button>
                <Button $w={141} $bg={c.accent} $pill><FilterIcon />Options</Button>
              </ButtonRow>
              <Table>
                <colgroup><col width="76" /><col /><col width="130" /><col width="171" /></colgroup>
                <thead>
                  <tr>
                    <CheckCell as="th"><Check aria-label="Select all available datasets" /></CheckCell>
                    <th><SortHead $pad={32}><SortIcon />Name</SortHead></th>
                    <th aria-label="Details" />
                    <th><SortHead $pad={19}><SortIcon />Type</SortHead></th>
                  </tr>
                </thead>
                <tbody>
                  {availableTypes.map((type, i) => (
                    <tr key={i}>
                      <CheckCell><Check aria-label={`Select dataset ${i + 1}`} /></CheckCell>
                      {i === 0 && (
                        <RedactedCell rowSpan={5}>
                          <Redacted>{redactedWidths.map((w, n) => <RedactedBar key={n} $w={w} />)}</Redacted>
                        </RedactedCell>
                      )}
                      <td />
                      <TypeCell>{type}</TypeCell>
                    </tr>
                  ))}
                </tbody>
              </Table>
            </Card>
          </Cards>
        </ScrollArea>
        <ScrollTrack aria-hidden="true">
          <ScrollArrow $up /><ScrollThumb /><ScrollArrow />
        </ScrollTrack>
        <DrawerTab aria-label="Collapse drawer"><Chevron /></DrawerTab>
      </Content>
    </Page>
  );
}
